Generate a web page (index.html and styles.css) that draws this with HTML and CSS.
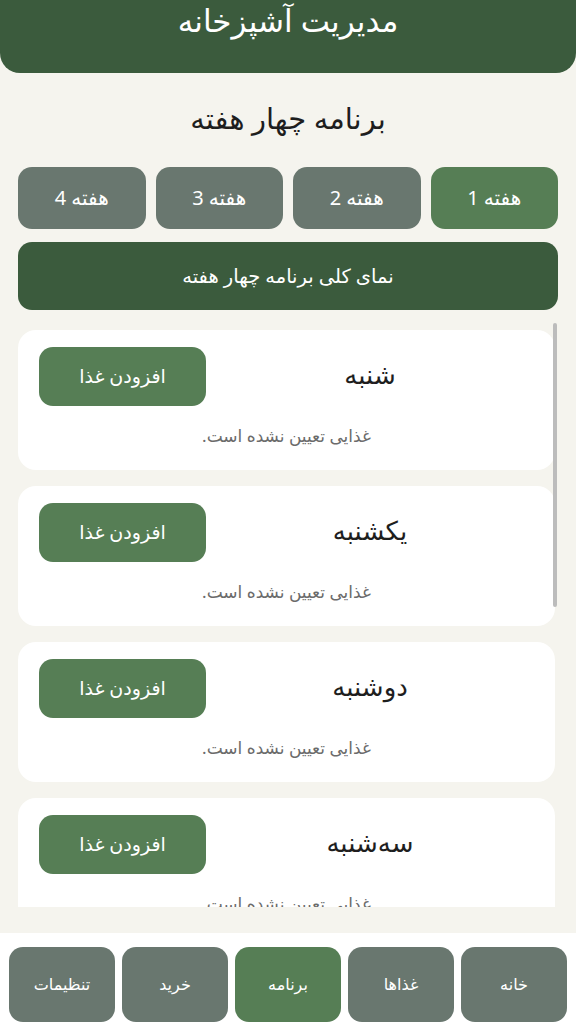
FILE: index.html
```html
<!DOCTYPE html>
<html lang="fa" dir="rtl">
<head>
<meta charset="utf-8">
<title>مدیریت آشپزخانه</title>
<link rel="stylesheet" href="styles.css">
</head>
<body>
<div class="app">
  <header class="header"><h1 class="title">مدیریت آشپزخانه</h1></header>
  <h2 class="subtitle">برنامه چهار هفته</h2>
  <div class="tabs">
    <button class="tab active">هفته 1</button>
    <button class="tab">هفته 2</button>
    <button class="tab">هفته 3</button>
    <button class="tab">هفته 4</button>
  </div>
  <button class="overview">نمای کلی برنامه چهار هفته</button>
  <div class="scroll-wrap">
    <div class="scroll">
      <div class="card">
        <div class="row"><div class="day">شنبه</div><button class="add">افزودن غذا</button></div>
        <p class="empty">غذایی تعیین نشده است.</p>
      </div>
      <div class="card">
        <div class="row"><div class="day">یکشنبه</div><button class="add">افزودن غذا</button></div>
        <p class="empty">غذایی تعیین نشده است.</p>
      </div>
      <div class="card">
        <div class="row"><div class="day">دوشنبه</div><button class="add">افزودن غذا</button></div>
        <p class="empty">غذایی تعیین نشده است.</p>
      </div>
      <div class="card">
        <div class="row"><div class="day">سه‌شنبه</div><button class="add">افزودن غذا</button></div>
        <p class="empty">غذایی تعیین نشده است.</p>
      </div>
    </div>
    <div class="thumb"></div>
  </div>
  <nav class="nav">
    <button class="nav-btn">خانه</button>
    <button class="nav-btn">غذاها</button>
    <button class="nav-btn active">برنامه</button>
    <button class="nav-btn">خرید</button>
    <button class="nav-btn">تنظیمات</button>
  </nav>
</div>
</body>
</html>
```
FILE: styles.css
```css
* { box-sizing: border-box; }
html, body { margin: 0; padding: 0; }
body {
  background: #f5f4ee;
  font-family: "Noto Sans", "DejaVu Sans", sans-serif;
  color: #1e1e1e;
  width: 576px;
  height: 1024px;
  overflow: hidden;
}
button { font-family: inherit; border: none; cursor: pointer; line-height: 1.3; }
.app { display: flex; flex-direction: column; height: 1024px; }
.header {
  background: #3b5b3d;
  height: 73px;
  border-radius: 0 0 20px 20px;
  flex-shrink: 0;
}
.title {
  margin: 0;
  color: #fff;
  font-size: 31px;
  font-weight: 400;
  line-height: 40px;
  text-align: center;
}
.subtitle {
  margin: 27px 0 0;
  font-size: 29px;
  font-weight: 400;
  line-height: 36px;
  text-align: center;
  color: #1e1e1e;
}
.tabs {
  display: flex;
  gap: 10px;
  margin: 31px 18px 0;
}
.tab {
  flex: 1;
  height: 62px;
  border-radius: 14px;
  background: #69776f;
  color: #fff;
  font-size: 20px;
}
.tab.active { background: #567e55; }
.overview {
  margin: 13px 18px 0;
  height: 68px;
  border-radius: 14px;
  background: #3b5b3d;
  color: #fff;
  font-size: 19.5px;
}
.scroll-wrap {
  position: relative;
  margin-top: 12px;
  height: 585px;
  flex-shrink: 0;
}
.scroll {
  height: 100%;
  overflow: hidden;
  padding: 8px 21px 0 18px;
}
.thumb {
  position: absolute;
  left: 553px;
  top: 1px;
  width: 4px;
  height: 284px;
  background: #bcbcbc;
  border-radius: 2px;
}
.card {
  background: #fff;
  border-radius: 18px;
  height: 140px;
  margin-bottom: 16px;
  padding: 17px 21px 0;
}
.row { display: flex; align-items: center; }
.day {
  flex: 1;
  text-align: center;
  font-size: 26px;
  line-height: 34px;
  margin-bottom: 5px;
  color: #1e1e1e;
}
.add {
  width: 167px;
  height: 59px;
  border-radius: 14px;
  background: #567e55;
  color: #fff;
  font-size: 19px;
}
.empty {
  margin: 18px 0 0;
  text-align: center;
  font-size: 17px;
  line-height: 24px;
  color: #6b6b6b;
}
.nav {
  margin-top: 26px;
  background: #fff;
  height: 91px;
  flex-shrink: 0;
  display: flex;
  gap: 7px;
  padding: 14px 9px 2px;
}
.nav-btn {
  flex: 1;
  border-radius: 14px;
  background: #69776f;
  color: #fff;
  font-size: 16px;
}
.nav-btn.active { background: #567e55; }
```
